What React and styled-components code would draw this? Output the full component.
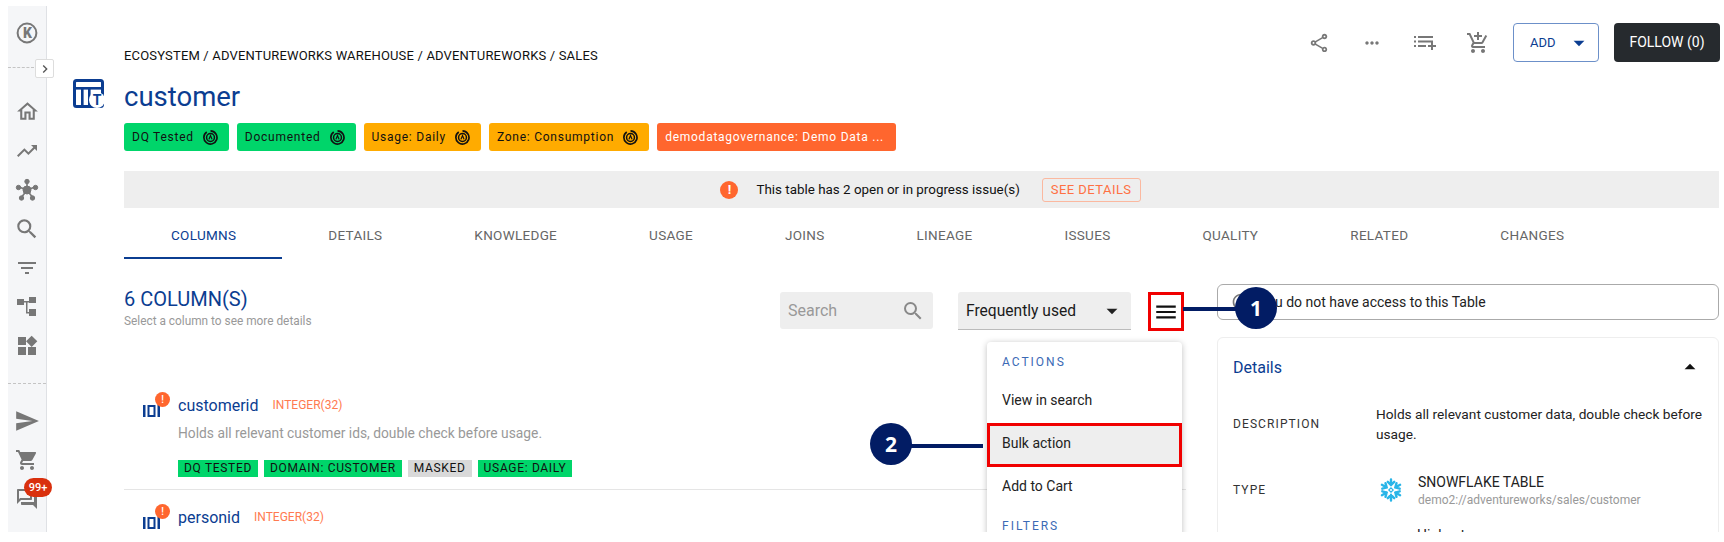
import React from 'react';
import styled, { createGlobalStyle } from 'styled-components';
import {
  MdOutlineHome,
  MdTrendingUp,
  MdSearch,
  MdFilterList,
  MdWidgets,
  MdSend,
  MdShoppingCart,
  MdOutlineQuestionAnswer,
  MdOutlineShare,
  MdMoreHoriz,
  MdOutlineAddShoppingCart,
  MdMenu,
  MdArrowDropDown,
  MdArrowDropUp,
  MdInfoOutline,
  MdChevronRight,
} from 'react-icons/md';

const BLUE = '#0b3d91';
const NAVY = '#021c64';
const RED = '#f00000';

const GlobalStyle = createGlobalStyle`
  html, body { margin: 0; padding: 0; background: #fff; }
  body { font-family: Roboto, "Liberation Sans", sans-serif; color: #1a1a1a; }
  * { box-sizing: border-box; }
`;

const TABS = ['COLUMNS', 'DETAILS', 'KNOWLEDGE', 'USAGE', 'JOINS', 'LINEAGE', 'ISSUES', 'QUALITY', 'RELATED', 'CHANGES'];

const HEAD_TAGS = [
  { label: 'DQ Tested', kind: 'green' },
  { label: 'Documented', kind: 'green' },
  { label: 'Usage: Daily', kind: 'amber' },
  { label: 'Zone: Consumption', kind: 'amber' },
  { label: 'demodatagovernance: Demo Data ...', kind: 'orange' },
];

const TAG_BG = { green: '#00d56a', amber: '#ffab00', orange: '#ff662e', grey: '#d9d9d9' };

const TargetIcon = () => (
  <svg width="15" height="15" viewBox="0 0 16 16" fill="none" stroke="#111">
    <path d="M4 2.200A7 7 0 1 0 8 1" strokeWidth="1.800" />
    <circle cx="8" cy="8" r="4.200" strokeWidth="1.600" />
    <path d="M6.300 10 8 6l1.700 4" strokeWidth="1.300" />
  </svg>
);

const ColumnIcon = () => (
  <svg width="17" height="12" viewBox="0 0 17 12" fill={BLUE} style={{ display: 'block' }}>
    <rect x="0" y="0" width="2.5" height="12" />
    <rect x="14.5" y="0" width="2.5" height="12" />
    <path d="M4.500 0h8v12h-8zM6.500 2v8h4V2z" fillRule="evenodd" />
  </svg>
);

const GraphIcon = () => (
  <svg width="24" height="24" viewBox="0 0 24 24" fill="#777" stroke="#777">
    <path d="M12 12 4 9M12 12l8-3M12 12 6 20M12 12l6 8M12 12V3" strokeWidth="1.6" />
    <circle cx="12" cy="12" r="4" />
    <circle cx="12" cy="3.5" r="2.2" />
    <circle cx="3.5" cy="9.5" r="2.2" />
    <circle cx="20.5" cy="9.5" r="2.2" />
    <circle cx="6.5" cy="20" r="2.2" />
    <circle cx="17.5" cy="20" r="2.2" />
  </svg>
);

const HierarchyIcon = () => (
  <svg width="22" height="20" viewBox="0 0 22 20" fill="#777">
    <rect x="1" y="2" width="7" height="6" />
    <rect x="13" y="0" width="7" height="6" />
    <rect x="13" y="12" width="7" height="7" />
    <path d="M8 4h5v1.500h-1.500V15H13v1.500h-3V5.500H8z" />
  </svg>
);

const QueueIcon = () => (
  <svg width="22" height="18" viewBox="0 0 22 18" fill="#777">
    <rect x="0" y="2" width="2" height="2" />
    <rect x="4" y="2" width="15" height="2" />
    <rect x="0" y="6.5" width="2" height="2" />
    <rect x="4" y="6.5" width="15" height="2" />
    <rect x="0" y="11" width="2" height="2" />
    <rect x="4" y="11" width="8" height="2" />
    <rect x="14" y="11" width="8" height="2" />
    <rect x="17" y="8" width="2" height="8" />
  </svg>
);

const TableIcon = () => (
  <svg width="32" height="29" viewBox="0 0 32 29" style={{ display: 'block' }}>
    <rect x="1.500" y="1.500" width="28" height="26" rx="2" fill="none" stroke={BLUE} strokeWidth="3" />
    <rect x="2" y="8" width="28" height="2.600" fill={BLUE} />
    <rect x="8" y="9" width="2.600" height="19" fill={BLUE} />
    <rect x="15" y="9" width="2.600" height="19" fill={BLUE} />
    <circle cx="24" cy="21" r="8" fill="#fff" />
    <text x="24" y="26" fontFamily="Roboto, sans-serif" fontSize="14" fontWeight="700" fill={BLUE} textAnchor="middle">T</text>
  </svg>
);

const KLogo = () => (
  <svg width="22" height="22" viewBox="0 0 22 22">
    <circle cx="11" cy="11" r="9.4" fill="none" stroke="#777" strokeWidth="2" />
    <text x="11.5" y="16" fontFamily="Roboto, sans-serif" fontSize="14" fontWeight="900" fill="#777" textAnchor="middle">K</text>
  </svg>
);

const SNOW_ARMS = [0, 60, 120, 180, 240, 300];

const SnowflakeIcon = () => (
  <svg width="24" height="24" viewBox="0 0 24 24" stroke="#29b5e8" strokeWidth="2.4" fill="none" strokeLinecap="round">
    {SNOW_ARMS.map((a) => (
      <path key={a} d="M12 1.500V7M8.800 3.800 12 7l3.200-3.200" transform={`rotate(${a} 12 12)`} />
    ))}
    <path d="M12 9.800 14.200 12 12 14.200 9.800 12z" strokeWidth="1.200" />
  </svg>
);

export default function App() {
  return (
    <Frame>
      <GlobalStyle />
      <Sidebar>
        <LogoSlot><KLogo /></LogoSlot>
        <DashedRule />
        <ExpandButton><MdChevronRight size={16} color="#555" /></ExpandButton>
        <NavGroup>
          <NavItem><MdOutlineHome size={25} color="#777" /></NavItem>
          <NavItem><MdTrendingUp size={24} color="#777" /></NavItem>
          <NavItem><GraphIcon /></NavItem>
          <NavItem><MdSearch size={26} color="#777" /></NavItem>
          <NavItem><MdFilterList size={24} color="#777" /></NavItem>
          <NavItem><HierarchyIcon /></NavItem>
          <NavItem><MdWidgets size={24} color="#777" /></NavItem>
        </NavGroup>
        <NavDivider />
        <NavGroup>
          <NavItem><MdSend size={26} color="#777" /></NavItem>
          <NavItem><MdShoppingCart size={24} color="#777" /></NavItem>
          <NavItem>
            <MdOutlineQuestionAnswer size={24} color="#777" />
            <CountBadge>99+</CountBadge>
          </NavItem>
        </NavGroup>
      </Sidebar>

      <Main>
        <Header>
          <TitleIcon><TableIcon /></TitleIcon>
          <TitleBlock>
            <Breadcrumb>ECOSYSTEM / ADVENTUREWORKS WAREHOUSE / ADVENTUREWORKS / SALES</Breadcrumb>
            <Title>customer</Title>
            <HeadTags>
              {HEAD_TAGS.map((t) => (
                <HeadTag key={t.label} $kind={t.kind}>
                  {t.label}
                  {t.kind !== 'orange' && <TargetIcon />}
                </HeadTag>
              ))}
            </HeadTags>
          </TitleBlock>
          <Actions>
            <ActionIcon><MdOutlineShare size={22} color="#777" /></ActionIcon>
            <ActionIcon><MdMoreHoriz size={20} color="#777" /></ActionIcon>
            <ActionIcon><QueueIcon /></ActionIcon>
            <ActionIcon><MdOutlineAddShoppingCart size={24} color="#777" /></ActionIcon>
            <AddButton>ADD<MdArrowDropDown size={26} color={BLUE} /></AddButton>
            <FollowButton>FOLLOW (0)</FollowButton>
          </Actions>
        </Header>

        <Content>
          <Banner>
            <BannerIcon>!</BannerIcon>
            This table has 2 open or in progress issue(s)
            <SeeDetails>SEE DETAILS</SeeDetails>
          </Banner>

          <Tabs>
            {TABS.map((t, i) => (
              <Tab key={t} $active={i === 0}>{t}</Tab>
            ))}
          </Tabs>

          <Body>
            <ColumnsPanel>
              <Toolbar>
                <Heading>
                  <HeadingTitle>6 COLUMN(S)</HeadingTitle>
                  <HeadingSub>Select a column to see more details</HeadingSub>
                </Heading>
                <SearchBox>
                  Search
                  <MdSearch size={24} color="#888" />
                </SearchBox>
                <SortSelect>
                  Frequently used
                  <MdArrowDropDown size={26} color="#222" />
                </SortSelect>
                <MenuButton><MdMenu size={26} color="#111" /></MenuButton>
              </Toolbar>

              <ColumnRow $divided>
                <ColumnGlyph>
                  <ColumnIcon />
                  <WarnBadge>!</WarnBadge>
                </ColumnGlyph>
                <ColumnMain>
                  <ColumnTitle>
                    <ColumnName>customerid</ColumnName>
                    <ColumnType>INTEGER(32)</ColumnType>
                  </ColumnTitle>
                  <ColumnDesc>Holds all relevant customer ids, double check before usage.</ColumnDesc>
                  <ColumnTags>
                    <ColumnTag $kind="green">DQ TESTED</ColumnTag>
                    <ColumnTag $kind="green">DOMAIN: CUSTOMER</ColumnTag>
                    <ColumnTag $kind="grey">MASKED</ColumnTag>
                    <ColumnTag $kind="green">USAGE: DAILY</ColumnTag>
                  </ColumnTags>
                </ColumnMain>
              </ColumnRow>
              <ColumnRow>
                <ColumnGlyph>
                  <ColumnIcon />
                  <WarnBadge>!</WarnBadge>
                </ColumnGlyph>
                <ColumnMain>
                  <ColumnTitle>
                    <ColumnName>personid</ColumnName>
                    <ColumnType>INTEGER(32)</ColumnType>
                  </ColumnTitle>
                </ColumnMain>
              </ColumnRow>

              <Menu>
                <MenuHeading>ACTIONS</MenuHeading>
                <MenuItem $height={42}>View in search</MenuItem>
                <MarkedItem>Bulk action</MarkedItem>
                <MenuItem $height={37}>Add to Cart</MenuItem>
                <MenuHeading $second>FILTERS</MenuHeading>
              </Menu>
            </ColumnsPanel>

            <SidePanel>
              <AccessBox>
                <MdInfoOutline size={20} color="#777" />
                You do not have access to this Table
              </AccessBox>
              <DetailsCard>
                <CardHeader>
                  Details
                  <MdArrowDropUp size={26} color="#111" />
                </CardHeader>
                <DetailRow>
                  <DetailLabel>DESCRIPTION</DetailLabel>
                  <DetailText>Holds all relevant customer data, double check before usage.</DetailText>
                </DetailRow>
                <TypeRow>
                  <DetailLabel>TYPE</DetailLabel>
                  <TypeValue>
                    <SnowflakeIcon />
                    <TypeText>
                      <TypeName>SNOWFLAKE TABLE</TypeName>
                      <TypePath>demo2://adventureworks/sales/customer</TypePath>
                    </TypeText>
                  </TypeValue>
                </TypeRow>
                <NextValue>Highest</NextValue>
              </DetailsCard>
            </SidePanel>
          </Body>
        </Content>
      </Main>

      <Connector $left={1175} $top={301} $width={55} />
      <Callout $left={1227} $top={281}>1</Callout>
      <Connector $left={903} $top={438} $width={72} />
      <Callout $left={862} $top={417}>2</Callout>
    </Frame>
  );
}

const Frame = styled.div`
  position: relative;
  display: flex;
  width: 1716px;
  height: 526px;
  margin: 6px 0 10px 8px;
  overflow: hidden;
  background: #fff;
`;

const Sidebar = styled.aside`
  position: relative;
  flex: 0 0 38px;
  display: flex;
  flex-direction: column;
  align-items: center;
  background: #f5f6f8;
  border-right: 1px solid #dfe1e5;
`;

const LogoSlot = styled.div`
  display: flex;
  margin-top: 16px;
  height: 22px;
`;

const DashedRule = styled.div`
  align-self: flex-start;
  width: 26px;
  margin-top: 23px;
  border-top: 1px dashed #c4c4c4;
`;

const ExpandButton = styled.div`
  position: absolute;
  left: 27px;
  top: 53px;
  width: 19px;
  height: 19px;
  display: flex;
  align-items: center;
  justify-content: center;
  background: #fff;
  border: 1px solid #ddd;
  border-radius: 2px;
`;

const NavGroup = styled.nav`
  display: flex;
  flex-direction: column;
  align-items: center;
  &:first-of-type { margin-top: 24px; }
`;

const NavItem = styled.div`
  position: relative;
  width: 38px;
  height: 39px;
  display: flex;
  align-items: center;
  justify-content: center;
`;

const NavDivider = styled.div`
  width: 100%;
  margin: 18px 0 17px;
  border-top: 1px dashed #c4c4c4;
`;

const CountBadge = styled.span`
  position: absolute;
  left: 16px;
  top: -1px;
  width: 28px;
  height: 19px;
  border-radius: 10px;
  background: #d9300d;
  color: #fff;
  font-size: 11px;
  font-weight: 500;
  line-height: 19px;
  text-align: center;
`;

const Main = styled.main`
  flex: 1;
  min-width: 0;
  display: flex;
  flex-direction: column;
  padding: 0 5px 0 25px;
`;

const Header = styled.header`
  flex: 0 0 165px;
  display: flex;
  align-items: flex-start;
`;

const TitleIcon = styled.div`
  flex: 0 0 52px;
  padding: 73px 0 0 1px;
`;

const TitleBlock = styled.div`
  flex: 1;
  padding-top: 42px;
`;

const Breadcrumb = styled.div`
  font-size: 13px;
  letter-spacing: 0.17px;
  line-height: 16px;
  color: #111;
`;

const Title = styled.h1`
  margin: 15px 0 8px;
  font-size: 27.5px;
  font-weight: 400;
  line-height: 36px;
  color: ${BLUE};
`;

const HeadTags = styled.div`
  display: flex;
  gap: 8px;
`;

const HeadTag = styled.span`
  display: inline-flex;
  align-items: center;
  gap: 9px;
  height: 28px;
  padding: 0 ${(p) => (p.$kind === 'orange' ? '12px' : '11px')} 0 8px;
  border-radius: 3px;
  background: ${(p) => TAG_BG[p.$kind]};
  color: ${(p) => (p.$kind === 'orange' ? '#fff' : '#111')};
  font-size: 12px;
  letter-spacing: 0.75px;
  white-space: nowrap;
`;

const Actions = styled.div`
  display: flex;
  align-items: center;
  padding-top: 17px;
  margin-right: -1px;
`;

const ActionIcon = styled.div`
  width: 53px;
  height: 39px;
  display: flex;
  align-items: center;
  justify-content: center;
`;

const AddButton = styled.div`
  display: flex;
  align-items: center;
  justify-content: space-between;
  width: 86px;
  height: 39px;
  margin: 0 15px 0 9px;
  padding: 0 6px 0 16px;
  border: 1px solid #6c90c9;
  border-radius: 4px;
  color: ${BLUE};
  font-size: 13px;
`;

const FollowButton = styled.div`
  width: 106px;
  height: 39px;
  border-radius: 4px;
  background: #262a2e;
  color: #fff;
  font-size: 14px;
  line-height: 39px;
  text-align: center;
`;

const Content = styled.div`
  margin-left: 52px;
`;

const Banner = styled.div`
  display: flex;
  align-items: center;
  justify-content: center;
  height: 37px;
  padding-left: 18px;
  background: #eeeeee;
  font-size: 13.4px;
  color: #111;
`;

const BannerIcon = styled.span`
  width: 18px;
  height: 18px;
  margin-right: 18px;
  border-radius: 50%;
  background: #ff662e;
  color: #fff;
  font-size: 13px;
  font-weight: 700;
  line-height: 18px;
  text-align: center;
`;

const SeeDetails = styled.span`
  height: 24px;
  margin-left: 22px;
  padding: 0 8px;
  border: 1px solid #fbb89f;
  border-radius: 3px;
  color: #ff7043;
  font-size: 13px;
  letter-spacing: 0.45px;
  line-height: 22px;
`;

const Tabs = styled.div`
  display: flex;
  height: 51px;
`;

const Tab = styled.div`
  padding: 0 46px;
  height: 51px;
  border-bottom: 2px solid ${(p) => (p.$active ? BLUE : 'transparent')};
  color: ${(p) => (p.$active ? BLUE : '#666')};
  font-size: 13.5px;
  letter-spacing: 0.3px;
  line-height: 55px;
  &:first-child { padding-left: 47px; }
`;

const Body = styled.div`
  display: flex;
  gap: 31px;
  margin-top: 25px;
`;

const ColumnsPanel = styled.section`
  position: relative;
  flex: 1;
  min-width: 0;
  padding-top: 3px;
`;

const Toolbar = styled.div`
  display: flex;
  align-items: flex-start;
  padding-right: 2px;
  height: 91px;
`;

const Heading = styled.div`
  flex: 1;
`;

const HeadingTitle = styled.div`
  font-size: 20px;
  line-height: 24px;
  color: ${BLUE};
`;

const HeadingSub = styled.div`
  margin-top: 2px;
  font-size: 11.85px;
  line-height: 16px;
  color: #999;
`;

const SearchBox = styled.div`
  display: flex;
  align-items: center;
  justify-content: space-between;
  width: 153px;
  height: 37px;
  margin: 5px 25px 0 0;
  padding: 0 8px;
  border-radius: 3px;
  background: #eeeeee;
  color: #999;
  font-size: 16px;
`;

const SortSelect = styled.div`
  display: flex;
  align-items: center;
  justify-content: space-between;
  width: 173px;
  height: 38px;
  margin: 5px 17px 0 0;
  padding: 0 6px 0 8px;
  border-bottom: 1px solid #bbb;
  border-radius: 3px 3px 0 0;
  background: #eeeeee;
  color: #1a1a1a;
  font-size: 15.6px;
`;

const MenuButton = styled.div`
  display: flex;
  align-items: center;
  justify-content: center;
  width: 36px;
  height: 39px;
  margin-top: 5px;
  border: 3px solid ${RED};
`;

const ColumnRow = styled.div`
  display: flex;
  padding: 17px 0 12px 19px;
  border-bottom: 1px solid ${(p) => (p.$divided ? '#e5e5e5' : 'transparent')};
`;

const ColumnGlyph = styled.div`
  position: relative;
  flex: 0 0 35px;
  height: 20px;
  padding-top: 10px;
`;

const WarnBadge = styled.span`
  position: absolute;
  left: 12px;
  top: -3px;
  width: 15px;
  height: 15px;
  border-radius: 50%;
  background: #ff662e;
  color: #fff;
  font-size: 10px;
  font-weight: 500;
  line-height: 15px;
  text-align: center;
`;

const ColumnMain = styled.div`
  flex: 1;
`;

const ColumnTitle = styled.div`
  display: flex;
  align-items: center;
  gap: 14px;
  height: 20px;
`;

const ColumnName = styled.span`
  font-size: 16px;
  color: ${BLUE};
`;

const ColumnType = styled.span`
  font-size: 12px;
  color: #ff7a50;
`;

const ColumnDesc = styled.div`
  margin-top: 8px;
  font-size: 13.8px;
  line-height: 20px;
  color: #999;
`;

const ColumnTags = styled.div`
  display: flex;
  gap: 6px;
  margin-top: 17px;
`;

const ColumnTag = styled.span`
  height: 17px;
  padding: 0 6px;
  background: ${(p) => TAG_BG[p.$kind]};
  color: #111;
  font-size: 12px;
  letter-spacing: 0.68px;
  line-height: 17px;
`;

const Menu = styled.div`
  position: absolute;
  left: 863px;
  top: 58px;
  width: 195px;
  padding: 8px 0 40px;
  background: #fff;
  border-radius: 4px;
  box-shadow: 0 1px 6px rgba(0, 0, 0, 0.25);
`;

const MenuHeading = styled.div`
  padding: 0 15px;
  margin-top: ${(p) => (p.$second ? '10px' : '0')};
  margin-bottom: ${(p) => (p.$second ? '0' : '5px')};
  color: #3b6ab5;
  font-size: 12px;
  letter-spacing: 2px;
  line-height: 24px;
`;

const MenuItem = styled.div`
  display: flex;
  align-items: center;
  height: ${(p) => p.$height}px;
  margin-bottom: ${(p) => (p.$height === 42 ? '2px' : '0')};
  padding-left: 15px;
  color: #222;
  font-size: 14px;
`;

const MarkedItem = styled.div`
  display: flex;
  align-items: center;
  height: 44px;
  padding: 0 0 4px 12px;
  border: 3px solid ${RED};
  background: #eeeeee;
  color: #222;
  font-size: 14px;
`;

const SidePanel = styled.aside`
  flex: 0 0 502px;
  display: flex;
  flex-direction: column;
  gap: 17px;
`;

const AccessBox = styled.div`
  display: flex;
  align-items: center;
  gap: 8px;
  height: 36px;
  padding: 0 13px;
  border: 1px solid #aaa;
  border-radius: 6px;
  color: #222;
  font-size: 14px;
`;

const DetailsCard = styled.div`
  padding: 16px 15px 0;
  border: 1px solid #eee;
  border-radius: 6px;
  height: 240px;
`;

const CardHeader = styled.div`
  display: flex;
  align-items: center;
  justify-content: space-between;
  height: 26px;
  color: ${BLUE};
  font-size: 16px;
`;

const DetailRow = styled.div`
  display: flex;
  align-items: center;
  margin-top: 24px;
`;

const TypeRow = styled(DetailRow)`
  margin-top: 28px;
`;

const DetailLabel = styled.div`
  flex: 0 0 143px;
  font-size: 12px;
  letter-spacing: 1.1px;
  color: #333;
`;

const DetailText = styled.div`
  font-size: 13.7px;
  line-height: 20px;
  color: #222;
`;

const TypeValue = styled.div`
  display: flex;
  align-items: center;
  gap: 15px;
  padding-left: 3px;
`;

const TypeText = styled.div`
  display: flex;
  flex-direction: column;
`;

const TypeName = styled.span`
  font-size: 14px;
  line-height: 20px;
  color: #222;
`;

const TypePath = styled.span`
  font-size: 12px;
  line-height: 16px;
  color: #999;
`;

const NextValue = styled.div`
  margin: 17px 0 0 184px;
  font-size: 14px;
  line-height: 20px;
  color: #222;
`;

const Connector = styled.div`
  position: absolute;
  left: ${(p) => p.$left}px;
  top: ${(p) => p.$top}px;
  width: ${(p) => p.$width}px;
  height: 4px;
  background: ${NAVY};
`;

const Callout = styled.div`
  position: absolute;
  left: ${(p) => p.$left}px;
  top: ${(p) => p.$top}px;
  width: 42px;
  height: 42px;
  border-radius: 50%;
  background: ${NAVY};
  color: #fff;
  font-family: "Open Sans", sans-serif;
  font-size: 21px;
  font-weight: 700;
  line-height: 42px;
  text-align: center;
`;
